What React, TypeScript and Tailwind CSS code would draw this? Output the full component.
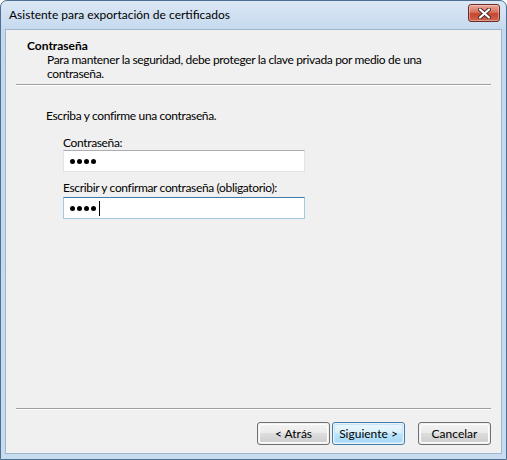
import React from 'react';

const font = { fontFamily: 'Lato, "Noto Sans", sans-serif' };

function WinButton({ label, primary }: { label: string; primary?: boolean }) {
  return (
    <div
      className={`flex h-[23px] w-[73px] items-center justify-center rounded-[3px] border p-px ${
        primary ? 'border-[#3c7fb1]' : 'border-[#707070]'
      }`}
    >
      <div
        className={`flex h-full w-full items-center justify-center rounded-[2px] border text-[12px] text-black ${
          primary
            ? 'border-[#c6e7fb] bg-[linear-gradient(#eaf6fd_0%,#d9f0fc_45%,#bee6fd_50%,#a7d9f5_100%)]'
            : 'border-[#fcfcfc] bg-[linear-gradient(#f2f2f2_0%,#ebebeb_45%,#dddddd_50%,#cfcfcf_100%)]'
        }`}
      >
        {label}
      </div>
    </div>
  );
}

function PasswordBox({ focused }: { focused?: boolean }) {
  return (
    <div
      className={`flex h-[22px] w-[242px] items-center gap-[2px] border bg-white pl-[6px] ${
        focused
          ? 'border-[#a4c9e3] border-t-[#3d7bad]'
          : 'border-[#e2e3ea] border-t-[#abadb3]'
      }`}
    >
      {[0, 1, 2, 3].map((i) => (
        <span key={i} className="size-[5px] rounded-full bg-black" />
      ))}
      {focused && <span className="ml-[1px] h-[15px] w-px bg-black" />}
    </div>
  );
}

export default function App() {
  return (
    <div className="h-[460px] w-[507px] bg-white" style={font}>
      <div className="flex h-[460px] w-[507px] flex-col rounded-t-[7px] border border-[#4e6f91] bg-[linear-gradient(#dbe8f5,#c4d8ee_30px,#c8dcf0)] px-[4px] pb-[5px]">
        {/* title bar */}
        <div className="flex h-[28px] shrink-0 items-center justify-between pl-[4px] pr-[2px]">
          <span className="mt-[-1px] text-[12px] text-black">Asistente para exportación de certificados</span>
          <div className="mt-[-4px] flex h-[18px] w-[32px] items-center justify-center rounded-[3px] border border-[#6e2b26] bg-[linear-gradient(#e9a99b_0%,#d7735f_45%,#c6442f_55%,#d06650_100%)] shadow-[inset_0_0_0_1px_rgba(255,255,255,0.35)]">
            <svg width="13" height="11" viewBox="0 0 13 11">
              <path
                d="M2 1.5 L11 9.5 M11 1.5 L2 9.5"
                stroke="#4a2a28"
                strokeWidth="4"
                strokeLinecap="round"
              />
              <path d="M2 1.5 L11 9.5 M11 1.5 L2 9.5" stroke="#ffffff" strokeWidth="2.2" strokeLinecap="round" />
            </svg>
          </div>
        </div>

        {/* client area */}
        <div className="flex flex-1 flex-col border border-[#9fb6cd] bg-[#f0f0f0] text-[12px] leading-[15px] tracking-[-0.35px] text-black">
          <div className="pl-[21px] pt-[8px]">
            <div className="font-bold tracking-normal">Contraseña</div>
            <div className="pl-[20px] leading-[14px]">
              Para mantener la seguridad, debe proteger la clave privada por medio de una
              <br />
              contraseña.
            </div>
          </div>
          <div className="mx-[10px] mt-[3px] border-t border-b border-t-[#a0a0a0] border-b-white" />

          <div className="pl-[40px] pt-[22px]">
            <div>Escriba y confirme una contraseña.</div>
            <div className="mt-[12px] pl-[17px]">
              <div>Contraseña:</div>
              <PasswordBox />
              <div className="mt-[8px]">Escribir y confirmar contraseña (obligatorio):</div>
              <div className="mt-[2px]">
                <PasswordBox focused />
              </div>
            </div>
          </div>

          <div className="flex-1" />
          <div className="mx-[10px] border-t border-b border-t-[#a0a0a0] border-b-white" />
          <div className="flex justify-end gap-[2px] pb-[8px] pr-[10px] pt-[12px] tracking-normal">
            <WinButton label="< Atrás" />
            <WinButton label="Siguiente >" primary />
            <div className="w-[9px]" />
            <WinButton label="Cancelar" />
          </div>
        </div>
      </div>
    </div>
  );
}
